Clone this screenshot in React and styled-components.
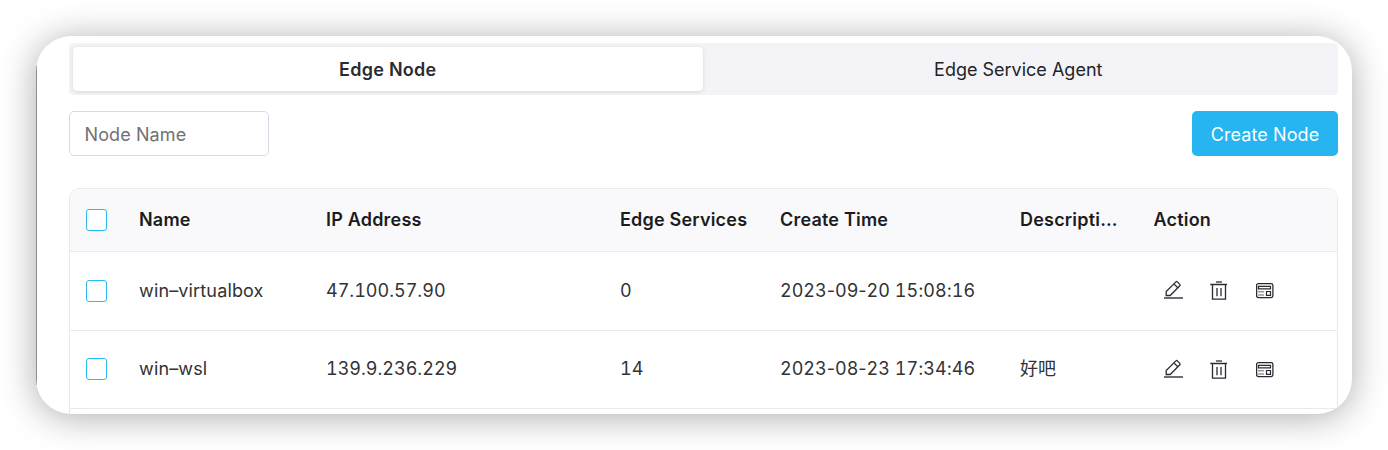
import React from "react";
import styled, { createGlobalStyle, css } from "styled-components";

const GlobalStyle = createGlobalStyle`
  * { box-sizing: border-box; }
  body {
    margin: 0;
    background: #fff;
    font-family: Inter, "Noto Sans CJK SC", sans-serif;
    font-size: 18px;
    color: #323236;
  }
`;

const Page = styled.div`
  height: 450px;
  padding: 36px;
  overflow: hidden;
`;

const Card = styled.main`
  position: relative;
  width: 1316px;
  height: 378px;
  padding: 7px 14px 0 33px;
  border-radius: 35px;
  background: #fff;
  box-shadow: 0 3px 36px rgba(0, 0, 0, 0.33);
  overflow: hidden;
`;

const EdgeLine = styled.span`
  position: absolute;
  left: 0;
  top: 29px;
  width: 1px;
  height: 320px;
  background: #8c8d93;
`;

const Tabs = styled.div`
  display: flex;
  height: 52px;
  padding: 4px 5px 4px 4px;
  border-radius: 4px;
  background: #f3f3f8;
`;

const Tab = styled.button`
  flex: 1;
  border: 0;
  padding: 0 0 0 1px;
  border-radius: 4px;
  font: inherit;
  background: transparent;
  color: #232326;
  ${(p) =>
    p.$active &&
    css`
      background: #fff;
      padding: 0;
      font-weight: 600;
      letter-spacing: 0.25px;
      color: #2c2c30;
      box-shadow: 0 1px 4px rgba(0, 0, 0, 0.12);
    `}
`;

const Toolbar = styled.div`
  display: flex;
  justify-content: space-between;
  margin-top: 16px;
`;

const SearchInput = styled.input`
  width: 200px;
  height: 45px;
  padding: 2px 14.5px 0;
  border: 1px solid #d9d8e6;
  border-radius: 5px;
  outline: 0;
  font: inherit;
  letter-spacing: 0.1px;
  &::placeholder { color: #717175; opacity: 1; }
`;

const PrimaryButton = styled.button`
  width: 146px;
  height: 45px;
  padding: 2px 0 0;
  border: 0;
  border-radius: 5px;
  background: #26b5f1;
  color: #fff;
  font: inherit;
  letter-spacing: 0.08px;
`;

const Table = styled.div`
  margin-top: 32px;
  border: 1px solid #e9e9ef;
  border-radius: 10px 10px 0 0;
  overflow: hidden;
`;

const Row = styled.div`
  display: grid;
  grid-template-columns: 69px 187px 294px 160px 240px 133.5px 1fr;
  align-items: center;
  height: ${(p) => p.$height}px;
  padding-bottom: 1px;
  border-bottom: 1px solid #e9e9ef;
  ${(p) =>
    p.$head &&
    css`
      background: #f9f9fc;
      color: #1c1c20;
      font-weight: 600;
    `}
`;

const Cell = styled.div`
  height: 24px;
  line-height: 24px;
  white-space: nowrap;
  letter-spacing: ${(p) => p.$spacing || 0}px;
`;

const NumberCell = styled(Cell)`
  font-variant-numeric: tabular-nums;
  font-kerning: none;
`;

const Separator = styled.span`
  font-variant-numeric: normal;
`;

const HeadCell = styled(Cell)`
  overflow: hidden;
  text-overflow: ellipsis;
  letter-spacing: 0.2px;
  padding-right: ${(p) => p.$gap || 0}px;
`;

const Checkbox = styled.span`
  display: block;
  width: 21px;
  height: 22px;
  margin: 0 0 0 16px;
  border: 1px solid #2cb9f2;
  border-radius: 3px;
  background: #fff;
`;

const Actions = styled.div`
  display: flex;
  align-self: start;
  gap: 26px;
  padding: 28px 0 0 10.5px;
  color: #2b2b35;
`;

const Icon = styled.svg`
  display: block;
  width: 20px;
  height: 20px;
  fill: none;
  stroke: currentColor;
  stroke-width: 1.3;
`;

const EditIcon = () => (
  <Icon viewBox="0 0 20 20">
    <path d="M2.2 15.5V11.5L11.9 1.9Q12.6 1.2 13.3 1.9L15.8 4.4Q16.5 5.1 15.8 5.8L6.2 15.5ZM9.9 3.9L13.8 7.8" />
    <path d="M0 18H19" stroke="#6d6d73" strokeWidth="2" />
  </Icon>
);

const TrashIcon = () => (
  <Icon viewBox="0 0 20 20">
    <path d="M6 2H12" stroke="#77777d" strokeWidth="2" />
    <path d="M0.3 4.5H17M2.5 4.5V19.2H15.5V4.5M7 8V16.3M11 8V16.3" />
  </Icon>
);

const PanelIcon = () => (
  <Icon viewBox="0 0 20 20">
    <rect x="0.6" y="3.7" width="16.3" height="13.9" rx="1.8" />
    <path d="M2.5 6.4H14.5V8.9H2.5Z" strokeWidth="1.2" />
    <path d="M2 11.8H8M2 15H8" strokeWidth="1" stroke="#66666f" />
    <path d="M10.5 11.5H14.5V15.4H10.5Z" strokeWidth="1.2" />
  </Icon>
);

const DateText = ({ value }) =>
  value.split(/([-:])/).map((part, i) => (i % 2 ? <Separator key={i}>{part}</Separator> : part));

const nodes = [
  { name: "win–virtualbox", ip: "47.100.57.90", services: "0", time: "2023-09-20 15:08:16", desc: "", height: 79 },
  { name: "win–wsl", ip: "139.9.236.229", services: "14", time: "2023-08-23 17:34:46", desc: "好吧", height: 78 },
];

export default function App() {
  return (
    <Page>
      <GlobalStyle />
      <Card>
        <EdgeLine />
        <Tabs>
          <Tab $active>Edge Node</Tab>
          <Tab>Edge Service Agent</Tab>
        </Tabs>
        <Toolbar>
          <SearchInput placeholder="Node Name" />
          <PrimaryButton>Create Node</PrimaryButton>
        </Toolbar>
        <Table>
          <Row $head $height={63}>
            <Checkbox />
            <HeadCell>Name</HeadCell>
            <HeadCell>IP Address</HeadCell>
            <HeadCell>Edge Services</HeadCell>
            <HeadCell>Create Time</HeadCell>
            <HeadCell $gap={34}>Description</HeadCell>
            <HeadCell>Action</HeadCell>
          </Row>
          {nodes.map((n) => (
            <Row key={n.name} $height={n.height}>
              <Checkbox />
              <Cell $spacing={0.15}>{n.name}</Cell>
              <NumberCell>{n.ip}</NumberCell>
              <NumberCell>{n.services}</NumberCell>
              <NumberCell>
                <DateText value={n.time} />
              </NumberCell>
              <Cell>{n.desc}</Cell>
              <Actions>
                <EditIcon />
                <TrashIcon />
                <PanelIcon />
              </Actions>
            </Row>
          ))}
          <Row $height={78} />
        </Table>
      </Card>
    </Page>
  );
}
